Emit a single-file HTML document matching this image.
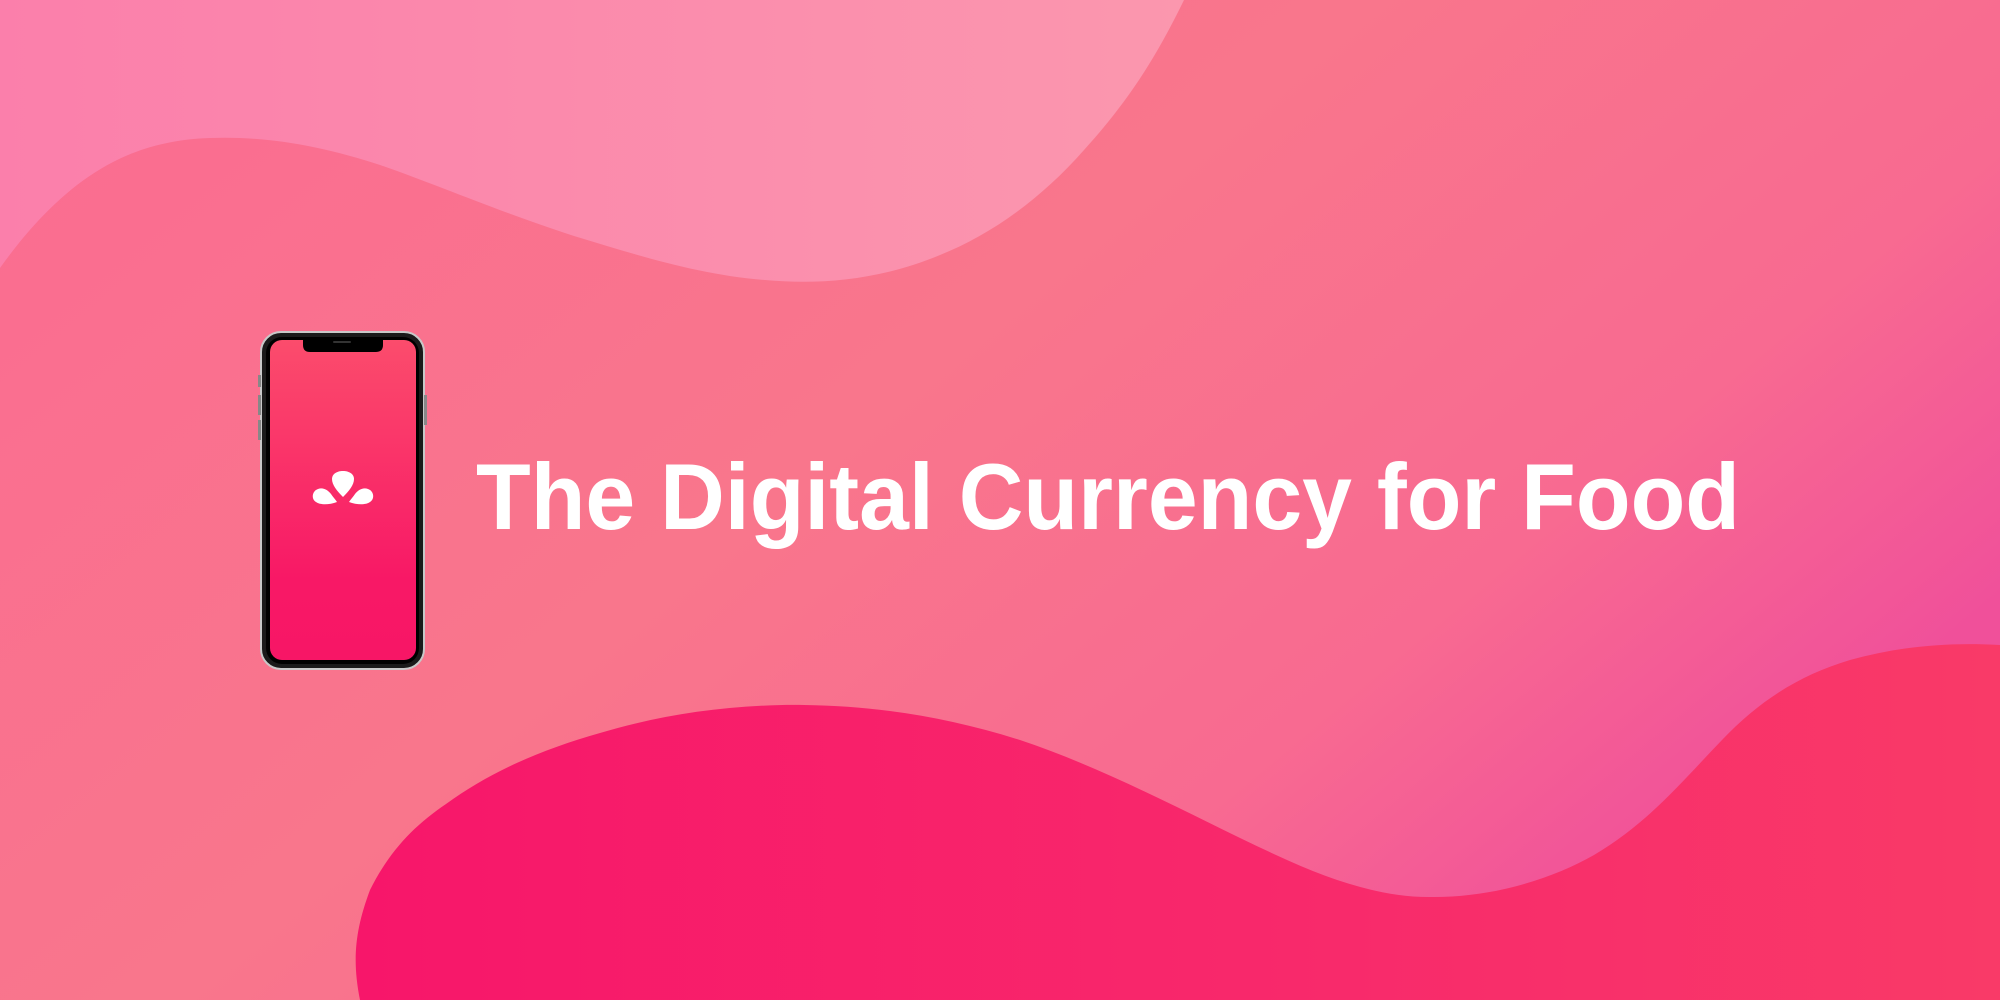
<!DOCTYPE html>
<html><head><meta charset="utf-8"><style>
html,body{margin:0;padding:0;width:2000px;height:1000px;overflow:hidden}
svg{display:block}
</style></head><body>
<svg width="2000" height="1000" viewBox="0 0 2000 1000" xmlns="http://www.w3.org/2000/svg">
<defs>
<linearGradient id="bg" x1="0" y1="0" x2="1" y2="0.6">
<stop offset="0" stop-color="#fa6b92"/>
<stop offset="0.5" stop-color="#f9768c"/>
<stop offset="0.8" stop-color="#f86a91"/>
<stop offset="1" stop-color="#f0509a"/>
</linearGradient>
<linearGradient id="top" x1="0" y1="0" x2="1" y2="0">
<stop offset="0" stop-color="#fb7fab"/>
<stop offset="1" stop-color="#fb97ae"/>
</linearGradient>
<linearGradient id="bot" x1="0" y1="0" x2="1" y2="0">
<stop offset="0" stop-color="#f7166a"/>
<stop offset="0.6" stop-color="#f82a6b"/>
<stop offset="1" stop-color="#f93a68"/>
</linearGradient>
<linearGradient id="scr" x1="0" y1="0" x2="0" y2="1">
<stop offset="0" stop-color="#fb4c6c"/>
<stop offset="0.75" stop-color="#f81866"/>
<stop offset="1" stop-color="#f71666"/>
</linearGradient>
</defs>
<rect width="2000" height="1000" fill="url(#bg)"/>
<path d="M0,0 L1184,0 C1150,70 1120,110 1084,150 C1040,200 990,235 940,255 C880,280 820,285 765,280 C700,275 640,256 574,236 C500,212 440,186 383,166 C320,145 265,136 210,138 C150,140 110,160 77,185 C45,210 20,240 0,268 Z" fill="url(#top)"/>
<path d="M360,1000 C352,960 355,930 370,890 C390,850 415,825 446,804 C490,772 540,750 600,733 C660,715 730,704 804,705 C880,706 950,718 1020,740 C1110,770 1200,820 1276,855 C1330,880 1380,897 1429,897 C1490,898 1550,880 1594,855 C1650,822 1685,778 1722,740 C1760,700 1800,675 1850,660 C1900,646 1950,642 2000,645 L2000,1000 Z" fill="url(#bot)"/>
<rect x="261" y="332" width="163" height="337" rx="20" fill="#1a1a1a" stroke="#c8c8c8" stroke-width="2"/>
<rect x="266" y="337" width="153" height="327" rx="16" fill="#000"/>
<rect x="270" y="340" width="146" height="320" rx="12" fill="url(#scr)"/>
<path d="M303,340 L383,340 L383,345 Q383,352 376,352 L310,352 Q303,352 303,345 Z" fill="#000"/>
<rect x="333" y="341" width="18" height="2" rx="1" fill="#333"/>
<rect x="258" y="375" width="3" height="12" fill="#888"/>
<rect x="258" y="395" width="3" height="20" fill="#888"/>
<rect x="258" y="420" width="3" height="20" fill="#888"/>
<rect x="424" y="395" width="3" height="30" fill="#888"/>
<g fill="#fff">
<path d="M343,497 C337,491 332,485 332,479 C332,474 337,471 343,471 C349,471 354,474 354,479 C354,485 349,491 343,497 Z"/>
<path d="M337,502 C329,505 320,505 316,502 C311,499 312,491 318,489 C323,487 328,490 331,494 C333,497 335,499 337,502 Z"/>
<path d="M349,502 C357,505 366,505 370,502 C375,499 374,491 368,489 C363,487 358,490 355,494 C353,497 351,499 349,502 Z"/>
</g>
<text x="476" y="529" font-family="'Liberation Sans',sans-serif" font-weight="bold" font-size="94" fill="#fff" textLength="1264" lengthAdjust="spacingAndGlyphs">The Digital Currency for Food</text>
</svg>
</body></html>
